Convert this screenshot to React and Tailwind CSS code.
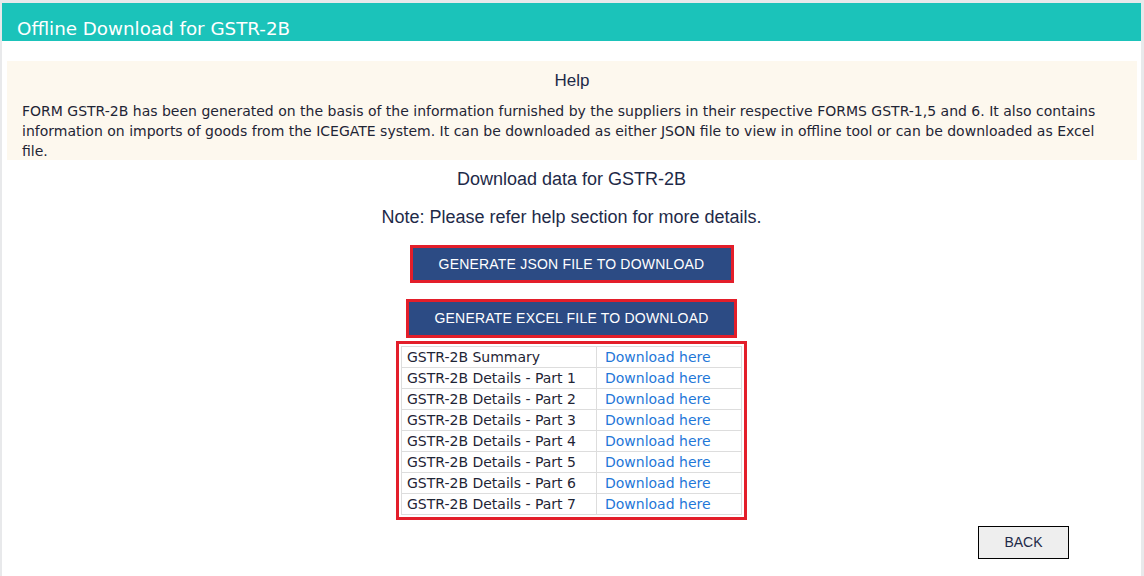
import React from 'react';

const rows = [
    'GSTR-2B Summary',
    'GSTR-2B Details - Part 1',
    'GSTR-2B Details - Part 2',
    'GSTR-2B Details - Part 3',
    'GSTR-2B Details - Part 4',
    'GSTR-2B Details - Part 5',
    'GSTR-2B Details - Part 6',
    'GSTR-2B Details - Part 7',
];

const OfflineDownload = () => {
    return (
        <div className="min-h-[576px] bg-[#e8e9eb] pt-[3px] pl-[2px] pr-[3px] font-['Liberation_Sans',Arial,sans-serif]">
            <div className="bg-white min-h-[573px]">
                <div className="h-[38px] bg-[#1bc3ba] px-[15px] pt-[16px]">
                    <h1 className="text-[18.3px] leading-[20px] text-white font-['DejaVu_Sans',Verdana,sans-serif]">
                        Offline Download for GSTR-2B
                    </h1>
                </div>

                <div className="pl-[5px] pr-[4px] pt-[20px]">
                    <div className="bg-[#fdf8ee] h-[99px] pt-[10px] px-[15px]">
                        <h2 className="text-center text-[17px] leading-[20px] text-[#1e2a48]">Help</h2>
                        <p className="mt-[10px] text-[14px] leading-[20px] text-[#1f2535] font-['DejaVu_Sans',Verdana,sans-serif]">
                            FORM GSTR-2B has been generated on the basis of the information furnished by the suppliers in their respective FORMS GSTR-1,5 and 6. It also contains information on imports of goods from the ICEGATE system. It can be downloaded as either JSON file to view in offline tool or can be downloaded as Excel file.
                        </p>
                    </div>
                </div>

                <div className="flex flex-col items-center">
                    <p className="mt-[9px] text-[18px] leading-[20px] text-[#1e2a48]">Download data for GSTR-2B</p>
                    <p className="mt-[18px] text-[18px] leading-[20px] text-[#1e2a48]">Note: Please refer help section for more details.</p>

                    <button className="mt-[18px] w-[324px] h-[38px] border-[3px] border-[#e31e2a] bg-[#2c4b84] text-white text-[14px] tracking-[0.2px]">
                        GENERATE JSON FILE TO DOWNLOAD
                    </button>
                    <button className="mt-[16px] w-[331px] h-[39px] border-[3px] border-[#e31e2a] bg-[#2c4b84] text-white text-[14px] tracking-[0.2px]">
                        GENERATE EXCEL FILE TO DOWNLOAD
                    </button>

                    <div className="mt-[3px] w-[351px] border-[3px] border-[#e31e2a] p-[2px]">
                        <table className="w-full border-collapse font-['DejaVu_Sans',Verdana,sans-serif] text-[14px]">
                            <tbody>
                                {rows.map((r) => (
                                    <tr key={r} className="h-[21px]">
                                        <td className="w-[195px] border border-[#dddddd] pl-[5px] leading-[20px] text-[#1f2535]">{r}</td>
                                        <td className="border border-[#dddddd] pl-[8px] leading-[20px] text-[#1f77d8]">
                                            <a href="#">Download here</a>
                                        </td>
                                    </tr>
                                ))}
                            </tbody>
                        </table>
                    </div>
                </div>

                <div className="flex justify-end pr-[72px] pt-[6px]">
                    <button className="w-[91px] h-[33px] border border-black bg-[#eeeeee] text-[14px] text-[#1e2a48]">BACK</button>
                </div>
            </div>
        </div>
    );
};

export default OfflineDownload;
